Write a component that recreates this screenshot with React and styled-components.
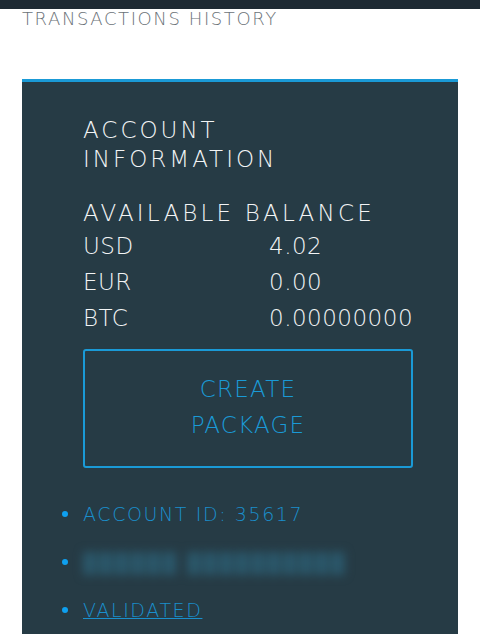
import styled, { createGlobalStyle } from "styled-components";

const Global = createGlobalStyle`
  body {
    margin: 0;
    background: #fff;
    font-family: "DejaVu Sans", "Open Sans", sans-serif;
  }
`;

const TopBar = styled.div`
  height: 9px;
  background: #1e2a33;
`;

const Page = styled.div`
  padding: 0 22px;
`;

const Title = styled.h2`
  margin: 0;
  padding-top: 1px;
  font-size: 18px;
  font-weight: 200;
  letter-spacing: 1.6px;
  color: #6b7278;
  line-height: 18px;
`;

const Card = styled.div`
  margin-top: 51px;
  background: #263b45;
  border-top: 3px solid #1a9ad6;
  padding: 34px 45px 40px 61px;
  color: #f2f4f5;
`;

const Heading = styled.h3`
  margin: 0;
  font-size: 23px;
  font-weight: 300;
  letter-spacing: 3px;
  line-height: 29px;
`;

const SubHeading = styled(Heading)`
  margin-top: 24px;
  line-height: 30px;
  letter-spacing: 3.2px;
`;

const Rates = styled.div`
  display: grid;
  grid-template-columns: 186px 1fr;
  font-size: 23px;
  font-weight: 300;
  letter-spacing: 0.5px;
  line-height: 36px;
`;

const Button = styled.div`
  box-sizing: border-box;
  margin-top: 13px;
  height: 119px;
  border: 2px solid #1a9ad6;
  border-radius: 3px;
  display: flex;
  align-items: center;
  justify-content: center;
  text-align: center;
  color: #1a9ad6;
  font-size: 23px;
  font-weight: 300;
  letter-spacing: 1.2px;
  line-height: 36px;
  padding: 0 100px 4px;
`;

const List = styled.ul`
  margin: 22px 0 0;
  padding: 0;
  list-style: none;
`;

const Item = styled.li`
  position: relative;
  height: 48px;
  display: flex;
  align-items: center;
  color: #1a8fcc;
  font-size: 19px;
  font-weight: 300;
  letter-spacing: 1.6px;

  &::before {
    content: "";
    position: absolute;
    left: -21px;
    top: 21px;
    width: 6px;
    height: 6px;
    border-radius: 50%;
    background: #0ea0f0;
  }
`;

const Blurred = styled.span`
  color: #2b586b;
  filter: blur(5px);
  letter-spacing: 2.5px;
`;

const Link = styled.a`
  color: inherit;
  text-decoration: underline;
`;

const rates = [
  ["USD", "4.02"],
  ["EUR", "0.00"],
  ["BTC", "0.00000000"],
];

export default function App() {
  return (
    <>
      <Global />
      <TopBar />
      <Page>
        <Title>TRANSACTIONS HISTORY</Title>
        <Card>
          <Heading>ACCOUNT<br />INFORMATION</Heading>
          <SubHeading>AVAILABLE BALANCE</SubHeading>
          <Rates>
            {rates.map(([c, v]) => [
              <span key={c}>{c}</span>,
              <span key={c + "v"}>{v}</span>,
            ])}
          </Rates>
          <Button>CREATE PACKAGE</Button>
          <List>
            <Item>ACCOUNT ID: 35617</Item>
            <Item><Blurred>██████ ██████████</Blurred></Item>
            <Item><Link href="#">VALIDATED</Link></Item>
          </List>
        </Card>
      </Page>
    </>
  );
}
